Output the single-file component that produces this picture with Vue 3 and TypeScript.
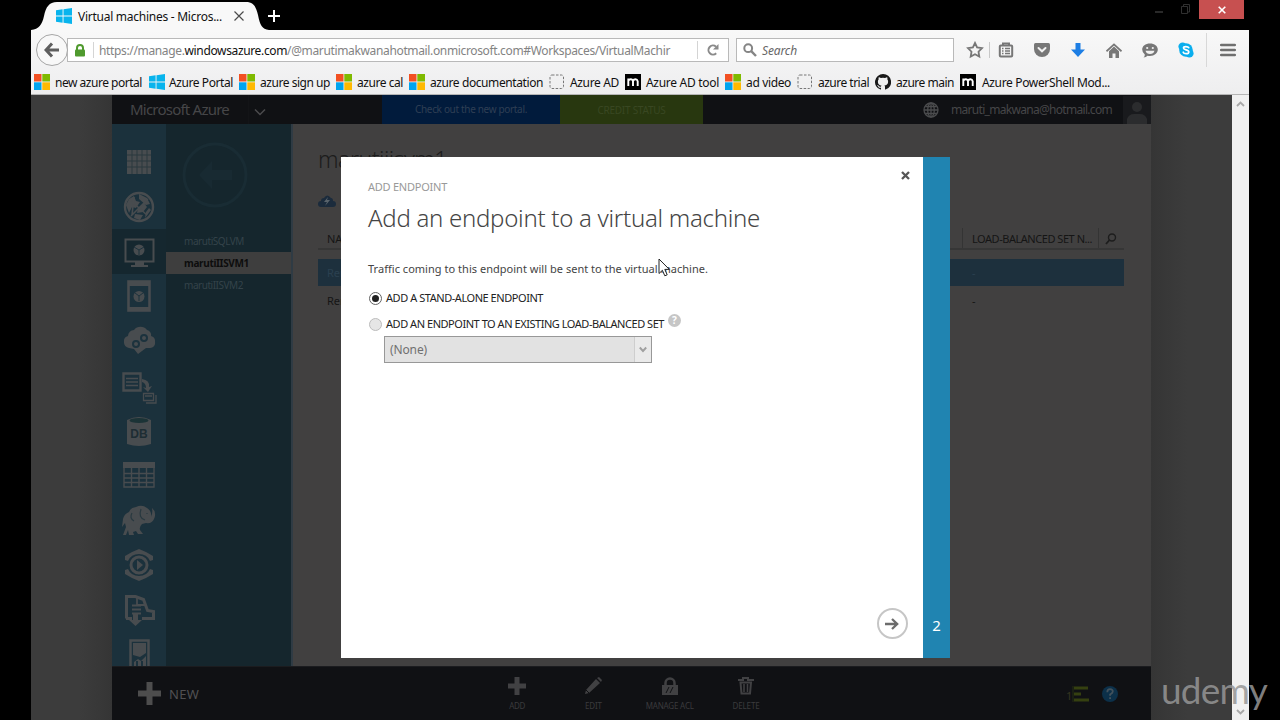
<script setup lang="ts">
import type { Directive } from 'vue'

const vFit: Directive<HTMLElement, number> = {
  mounted(el, binding) {
    const natural = el.getBoundingClientRect().width
    const count = (el.textContent || '').trim().length
    if (count > 0) el.style.letterSpacing = (binding.value - natural) / count + 'px'
  },
}

interface Bookmark {
  label: string
  icon: 'ms' | 'win' | 'blank' | 'm' | 'github'
  slot: number
  gap: number
  text: number
}

const bookmarks: Bookmark[] = [
  { label: 'new azure portal', icon: 'ms', slot: 115, gap: 5, text: 87 },
  { label: 'Azure Portal', icon: 'win', slot: 90, gap: 4, text: 64 },
  { label: 'azure sign up', icon: 'ms', slot: 97, gap: 5, text: 70 },
  { label: 'azure cal', icon: 'ms', slot: 73, gap: 5, text: 46 },
  { label: 'azure documentation', icon: 'ms', slot: 140, gap: 5, text: 113 },
  { label: 'Azure AD', icon: 'blank', slot: 76, gap: 5, text: 49 },
  { label: 'Azure AD tool', icon: 'm', slot: 100, gap: 5, text: 73 },
  { label: 'ad video', icon: 'ms', slot: 72, gap: 5, text: 45 },
  { label: 'azure trial', icon: 'blank', slot: 78, gap: 5, text: 51 },
  { label: 'azure main', icon: 'github', slot: 85, gap: 5, text: 58 },
  { label: 'Azure PowerShell Mod...', icon: 'm', slot: 170, gap: 6, text: 128 },
]

const services: { name: string; art: string }[] = [
  { name: 'all', art: '<rect x="6" y="6" width="24" height="24" fill="currentColor"/><path d="M6 11h24M6 17h24M6 23h24M11 6v24M16 6v24M21 6v24M26 6v24" stroke="#2b383e" stroke-width="1"/>' },
  { name: 'web', art: '<circle cx="18" cy="18" r="14" fill="none" stroke="currentColor" stroke-width="2.4"/><path d="M8 10l5-3 2 5 4 1-4 6-4-1-3 6-3-8zM18 5l8 4 3 6-4 1-7-6zM17 19l6-5 3 4-4 5-6 1zM25 23l3-4 2 2-6 8zM14 25l8 1-3 5-6-2z" fill="currentColor"/><path d="M9 11l17 15M10 27L27 10M13 8l-2 18" fill="none" stroke="currentColor" stroke-width="1.6"/>' },
  { name: 'vm', art: '<path d="M4.500 6.500h28v22h-28z" fill="none" stroke="currentColor" stroke-width="2"/><path d="M14 29h9v3h4v2H10v-2h4z" fill="currentColor"/><circle cx="18" cy="17" r="5.500" fill="currentColor"/><path d="M13 14l5 3 5-3M18 17v5" fill="none" stroke="#1c323d"/>' },
  { name: 'mobile', art: '<rect x="7.500" y="3.500" width="21" height="29" fill="none" stroke="currentColor" stroke-width="2.600"/><path d="M7 4h22v4H7zM7 29h22v4H7z" fill="currentColor"/><circle cx="18" cy="18.500" r="5.500" fill="currentColor"/><path d="M14 15l4 3 4-3M18 18v5" fill="none" stroke="#1c323d"/>' },
  { name: 'cloud', art: '<path d="M8 25a5.500 5.500 0 0 1-5-6 5.500 5.500 0 0 1 4-6 6 6 0 0 1 6-6 8 8 0 0 1 13 0 5 5 0 0 1 4 6 5.500 5.500 0 0 1 4 6 5 5 0 0 1-5 6h-4l-8 6-4-5z" fill="currentColor"/><g fill="none" stroke="#1c323d" stroke-width="2"><circle cx="15" cy="21" r="3"/><circle cx="23" cy="15" r="3"/></g>' },
  { name: 'sql-migrate', art: '<path d="M2.500 5.500h17v17h-17z" fill="none" stroke="currentColor" stroke-width="2.400"/><path d="M5 10.500h12M5 14h12M5 17.500h12" stroke="currentColor" stroke-width="1.600"/><path d="M21 11q8 1 7 8l3-1-4 6-5-5 3 1q0-5-4-6z" fill="currentColor"/><path d="M22.500 25.500h10v7h-10zM25 35h10v-8M24 28h7" fill="none" stroke="currentColor" stroke-width="1.300"/>' },
  { name: 'sql', art: '<path d="M6 7q12-6 24 0v24q-12 4-24 0z" fill="currentColor"/><ellipse cx="18" cy="7.500" rx="9.500" ry="2.500" fill="#1b3336"/><text x="18" y="25" text-anchor="middle" font-family="Liberation Sans, sans-serif" font-size="12" font-weight="700" fill="#1d2d33">DB</text>' },
  { name: 'storage', art: '<path d="M2 5h32v6H2z" fill="currentColor"/><path d="M3 11v19h30V11M3 16.500h30M3 21h30M3 25.500h30M10.500 11v19M18 11v19M25.500 11v19" fill="none" stroke="currentColor" stroke-width="1.400"/>' },
  { name: 'hdinsight', art: '<path d="M2 17q1-5 6-7 1-4 7-5 6-3 11 1 5 3 4 9 2-4 1-9 5 4 2 11-2 5-8 4l-4 1q-3 3-2 6l3 4h-5l-2-3-3 1 1 3h-5l-1-5-2 5H2l3-8-1-4-3 4z" fill="currentColor"/><path d="M20 7q-3 9 4 11M11 11q-3 5 2 8M26 11v1" fill="none" stroke="#293940" stroke-width="1.200"/>' },
  { name: 'media', art: '<path d="M18 2l7 3 7 4v4l-3 1q-3-7-11-7T7 14l-3-1V9l7-4zM18 34l7-3 7-4v-4l-3-1q-3 7-11 7T7 22l-3 1v4l7 4z" fill="currentColor"/><circle cx="18" cy="18" r="8" fill="none" stroke="currentColor" stroke-width="3"/><path d="M16 13l6 5-6 5z" fill="currentColor"/>' },
  { name: 'service-bus', art: '<path d="M5.500 26.500v-22h9l8 3 4 11 6 1v7H21M5 26.500h6" fill="none" stroke="currentColor" stroke-width="3"/><path d="M16 4v9h8M11 13.500h9M11 17.500h9M11 21.500h9" fill="none" stroke="currentColor" stroke-width="1.800"/><path d="M12 22h5v6h4l-6.500 6L8 28h4z" fill="currentColor"/>' },
  { name: 'studio', art: '<path d="M9.500 3.500h18v33h-18z" fill="none" stroke="currentColor" stroke-width="2.500"/><path d="M12 6h13v10l-6 4-7-2zM13 25l4-3 3 2 5-5v11h-3v-6h-2v6h-3v-6h-2v6h-2z" fill="currentColor"/>' },
]

const machines = [
  { name: 'marutiSQLVM', width: 60, active: false },
  { name: 'marutiIISVM1', width: 65, active: true },
  { name: 'marutiIISVM2', width: 59, active: false },
]
</script>

<template>
  <div class="screen">
    <div class="browser">
      <div class="tabstrip">
        <div class="tab">
          <svg class="tabshape" width="238" height="30" viewBox="0 0 238 30"><path d="M0 30C8 29 11 25 13 16 15 7 18 2 26 2H215C223 2 225 7 227 15 229 25 231 29 238 30Z" fill="#f8f8f8" /></svg>
          <svg class="winlogo" width="16" height="16" viewBox="0 0 16 16"><path d="M0 2.300 6.600 1.300V7.500H0zM7.500 1.200 16 0V7.500H7.500zM0 8.500h6.600v6.200L0 13.700zM7.500 8.500H16V16l-8.500-1.200z" fill="#08b4ed" /></svg>
          <span class="tabtitle"><span v-fit="144" class="fit">Virtual machines - Micros...</span></span>
          <svg class="tabclose" width="10" height="10" viewBox="0 0 10 10"><path d="M.5.500l9 9m0-9l-9 9" stroke="#4b4b4b" stroke-width="1.200" /></svg>
        </div>
        <svg class="newtab" width="12" height="12" viewBox="0 0 12 12"><path d="M6 0v12M0 6h12" stroke="#fff" stroke-width="2" /></svg>
        <div class="winbuttons">
          <svg width="40" height="18" viewBox="0 0 40 18"><path d="M1 12h8" stroke="#292929" stroke-width="2" /><path d="M27.500 6.500h6v7h-6zM29.500 6V4.500h6V12H34" fill="none" stroke="#303030" /></svg>
          <span class="winclose"><svg width="8" height="8" viewBox="0 0 8 8"><path d="M.7.700l6.600 6.600m0-6.600L.7 7.300" stroke="#fff" stroke-width="1.600" /></svg></span>
        </div>
      </div>

      <div class="toolbar">
        <div class="navrow">
          <div class="backbtn"><svg width="16" height="16" viewBox="0 0 16 16"><path d="M8 1.500 2 8l6 6.500M2.500 8H15" fill="none" stroke="#5e5e5e" stroke-width="3" /></svg></div>
          <div class="urlbar">
            <svg class="lock" width="12" height="13" viewBox="0 0 12 13"><path d="M3 6V4a3 3 0 0 1 6 0v2" fill="none" stroke="#4f9a2e" stroke-width="2" /><rect x="1" y="5.500" width="10" height="7" rx="1" fill="#4f9a2e" /></svg>
            <span class="urltext"><span v-fit="571" class="fit">https://manage.<b>windowsazure.com</b>/@marutimakwanahotmail.onmicrosoft.com#Workspaces/VirtualMachir</span></span>
            <span class="reload"><svg width="12" height="12" viewBox="0 0 12 12"><path d="M9.200 9.200A4.500 4.500 0 1 1 9 2.700" fill="none" stroke="#8a8a8a" stroke-width="2" /><path d="M11.500 0v5.500H6z" fill="#8a8a8a" /></svg></span>
          </div>
          <div class="searchbox">
            <svg width="14" height="14" viewBox="0 0 14 14"><circle cx="5.200" cy="5.200" r="3.900" fill="none" stroke="#858585" stroke-width="2" /><path d="M8.200 8.200l4.800 4.800" stroke="#858585" stroke-width="2.400" /></svg>
            <span v-fit="35" class="fit">Search</span>
          </div>
          <div class="tools">
            <svg class="t-star" width="18" height="18" viewBox="0 0 18 18"><path d="M9 2l2.100 4.500 4.900.7-3.500 3.500.8 4.900L9 13.300l-4.300 2.300.8-4.900L2 7.200l4.900-.7z" fill="none" stroke="#777" stroke-width="1.800" /></svg>
            <i class="sep"></i>
            <svg class="t-list" width="16" height="16" viewBox="0 0 16 16"><path d="M5 3V1.500h6V3" fill="none" stroke="#777" stroke-width="2" /><rect x="1.800" y="3.500" width="12.400" height="11" rx="1" fill="none" stroke="#777" stroke-width="2" /><path d="M4 6.500h1.500M4 9h1.500M4 11.500h1.500M7 6.500h5M7 9h5M7 11.500h5" stroke="#777" stroke-width="1.400" /></svg>
            <svg class="t-pocket" width="16" height="14" viewBox="0 0 16 14"><path d="M1.500 0h13Q16 0 16 1.500V6a8 8 0 0 1-16 0V1.500Q0 0 1.500 0z" fill="#777" /><path d="M4.500 5 8 8.300 11.500 5" fill="none" stroke="#f1f1f1" stroke-width="2" stroke-linecap="round" /></svg>
            <svg class="t-down" width="14" height="14" viewBox="0 0 14 14"><path d="M4.500 0h5v6.500H14L7 14 0 6.500h4.500z" fill="#1d7ee4" /></svg>
            <svg class="t-home" width="16" height="15" viewBox="0 0 16 15"><path d="M.5 8.300 8 1.300l7.500 7" fill="none" stroke="#777" stroke-width="1.700" /><path d="M3 8.200 8 3.600l5 4.600V15H9.500v-4.500h-3V15H3z" fill="#777" /></svg>
            <svg class="t-chat" width="16" height="15" viewBox="0 0 16 15"><path d="M8 .5c4.500 0 7.800 2.600 7.800 6S12.500 13 8 13q-1.300 0-2.400-.3Q4 14.500 1.500 14.500 3 13.300 2.800 11.500.2 9.500.2 6.500c0-3.400 3.300-6 7.800-6z" fill="#777" /><circle cx="5.200" cy="5" r="1.100" fill="#f1f1f1" /><circle cx="10.800" cy="5" r="1.100" fill="#f1f1f1" /><path d="M3.500 7.700h9q-1 3.300-4.500 3.300T3.500 7.700z" fill="#f1f1f1" /></svg>
            <svg class="t-skype" width="16" height="16" viewBox="0 0 16 16"><circle cx="8" cy="8" r="6.800" fill="#0aaeee" /><circle cx="4.600" cy="4.600" r="4.200" fill="#0aaeee" /><circle cx="11.400" cy="11.400" r="4.200" fill="#0aaeee" /><path d="M10.700 5.700C10 4.300 5.500 4 5.500 6.100c0 2.200 5.300 1.300 5.300 3.800 0 2.300-4.900 2.200-5.600.3" fill="none" stroke="#fff" stroke-width="1.700" stroke-linecap="round" /></svg>
            <i class="sep tall"></i>
            <svg class="t-menu" width="16" height="14" viewBox="0 0 16 14"><path d="M1.200 2h13.600M1.200 7h13.600M1.200 12h13.600" stroke="#6f6f6f" stroke-width="2.600" stroke-linecap="round" /></svg>
          </div>
        </div>

        <div class="bookmarks">
          <div v-for="b in bookmarks" :key="b.label" class="bookmark" :style="{ width: b.slot + 'px', gap: b.gap + 'px' }">
            <svg width="16" height="16" viewBox="0 0 16 16">
              <g v-if="b.icon === 'ms'"><path d="M0 0h7.500v7.500H0z" fill="#f25022" /><path d="M8.300 0H16v7.500H8.300z" fill="#7fba00" /><path d="M0 8.300h7.500V16H0z" fill="#00a4ef" /><path d="M8.300 8.300H16V16H8.300z" fill="#ffb900" /></g>
              <path v-else-if="b.icon === 'win'" d="M0 2.300 6.600 1.300V7.500H0zM7.500 1.200 16 0V7.500H7.500zM0 8.500h6.600v6.200L0 13.700zM7.500 8.500H16V16l-8.500-1.200z" fill="#08b4ed" />
              <rect v-else-if="b.icon === 'blank'" x="1" y="1" width="13.500" height="13.500" rx="2" fill="none" stroke="#777" stroke-dasharray="2.500 1.500" />
              <g v-else-if="b.icon === 'm'"><path d="M0 0h16v16H0z" fill="#000" /><path d="M3.300 12V4.500M3.300 7Q4 5.200 5.800 5.200T8 7.200V12M8 7Q8.800 5.200 10.500 5.200t2.200 2V12" fill="none" stroke="#fff" stroke-width="1.900" /></g>
              <path v-else d="M8 0a8 8 0 0 0-2.500 15.600c.4.100.5-.2.500-.4v-1.500c-2.200.5-2.700-1-2.700-1-.4-.9-.9-1.200-.9-1.200-.7-.5.100-.5.100-.5.800.1 1.200.8 1.200.8.700 1.300 1.900.9 2.300.7.100-.5.300-.9.500-1.100-1.800-.2-3.600-.9-3.600-4 0-.9.300-1.600.8-2.100-.1-.2-.4-1 .1-2.100 0 0 .7-.2 2.200.8a7.500 7.500 0 0 1 4 0c1.500-1 2.200-.8 2.200-.8.400 1.100.2 1.900.1 2.100.5.600.8 1.300.8 2.100 0 3.100-1.900 3.700-3.700 3.900.3.300.6.800.6 1.500v2.400c0 .2.100.5.600.4A8 8 0 0 0 8 0z" fill="#191919" />
            </svg>
            <span v-fit="b.text" class="fit">{{ b.label }}</span>
          </div>
        </div>
      </div>

      <div class="viewport">
        <div class="gutter left"></div>
        <main class="portal">
          <header class="topbar">
            <div class="brand"><span v-fit="99" class="fit">Microsoft Azure</span></div>
            <div class="brandmenu"><svg width="12" height="8" viewBox="0 0 12 8"><path d="M1 1.500l5 5 5-5" fill="none" stroke="#4b4b4d" stroke-width="1.500" /></svg></div>
            <div class="newportal"><span v-fit="112" class="fit">Check out the new portal.</span></div>
            <div class="credit"><span v-fit="68" class="fit">CREDIT STATUS</span></div>
            <div class="account">
              <svg width="16" height="16" viewBox="0 0 16 16"><g fill="none" stroke="#4b4c4e" stroke-width="1.300"><circle cx="8" cy="8" r="7" /><ellipse cx="8" cy="8" rx="3.300" ry="7" /><path d="M8 1v14M1 8h14M2.300 4.500h11.400M2.300 11.500h11.400" /></g></svg>
              <span v-fit="161" class="fit">maruti_makwana@hotmail.com</span>
              <div class="avatar"><svg width="28" height="28" viewBox="0 0 28 28"><circle cx="14" cy="11" r="5" fill="#2b2c2e" /><path d="M4 28v-5q2-5 7-5h6q5 0 7 5v5z" fill="#2b2c2e" /></svg></div>
            </div>
          </header>

          <div class="body">
            <nav class="services">
              <div v-for="s in services" :key="s.name" class="service" :class="{ current: s.name === 'vm' }">
                <svg width="36" height="36" viewBox="0 0 36 36" v-html="s.art"></svg>
              </div>
            </nav>
            <aside class="machines">
              <div class="backring"><svg width="68" height="68" viewBox="0 0 68 68"><circle cx="34" cy="34" r="31" fill="none" stroke="#192c34" stroke-width="3" /><path d="M31 20 18 34l13 14v-9h20V29H31z" fill="#182a32" /></svg></div>
              <div v-for="m in machines" :key="m.name" class="machine" :class="{ chosen: m.active }"><span v-fit="m.width" class="fit">{{ m.name }}</span></div>
            </aside>
            <section class="content">
              <h1><span v-fit="129" class="fit">marutiiisvm1</span></h1>
              <div class="command"><svg width="18" height="12" viewBox="0 0 18 12"><path d="M3 12a3 3 0 0 1 0-6q0-3 3-3 3-5 7 0 2 0 2 3a3 3 0 0 1 0 6z" fill="#1b2b3c" /><path d="M10 2 6 7h3l-2 4 5-6H9z" fill="#59636b" /></svg></div>
              <div class="thead">
                <span class="name">NAME</span>
                <span class="lb"><span v-fit="120" class="fit">LOAD-BALANCED SET N...</span></span>
                <span class="find"><svg width="12" height="12" viewBox="0 0 12 12"><circle cx="7" cy="4.500" r="3.500" fill="none" stroke="#1d1d1d" stroke-width="1.400" /><path d="M4.500 7 1 11" stroke="#1d1d1d" stroke-width="1.800" /></svg></span>
              </div>
              <div class="trow picked"><span class="name">Remote</span><span class="lb">-</span></div>
              <div class="trow"><span class="name">Remote</span><span class="lb">-</span></div>
            </section>
          </div>

          <footer class="drawer">
            <div class="new"><svg width="23" height="23" viewBox="0 0 23 23"><path d="M8.500 0h6v8.500H23v6h-8.500V23h-6v-8.500H0v-6h8.500z" fill="#4d4d4d" /></svg><span v-fit="30" class="fit">NEW</span></div>
            <div class="actions">
              <div class="action"><svg width="18" height="18" viewBox="0 0 18 18"><path d="M6.500 0h5v6.500H18v5h-6.500V18h-5v-6.500H0v-5h6.500z" fill="#414143" /></svg><span v-fit="16" class="fit">ADD</span></div>
              <div class="action"><svg width="18" height="18" viewBox="0 0 18 18"><path d="M12 2l4 4L5 16l-4 1 1-4zM13 1l2-1 3 3-1 2z" fill="#414143" /><path d="M2 13l3 3" stroke="#0f1013" /></svg><span v-fit="17" class="fit">EDIT</span></div>
              <div class="action"><svg width="18" height="18" viewBox="0 0 18 18"><path d="M4.500 9V6a4.500 4.500 0 0 1 9 0v3" fill="none" stroke="#414143" stroke-width="2.500" /><path d="M1 8h16v10H1z" fill="#414143" /><path d="M8 10l-3 6M12 10l-3 6" stroke="#101114" /></svg><span v-fit="48" class="fit">MANAGE ACL</span></div>
              <div class="action"><svg width="18" height="18" viewBox="0 0 18 18"><path d="M1 3h5V1h5v2h6M3.500 5.500h10.500l-1 11H4.500z" fill="none" stroke="#414143" stroke-width="2" /><path d="M7 7v8M10.500 7v8" stroke="#414143" stroke-width="1.500" /></svg><span v-fit="27" class="fit">DELETE</span></div>
            </div>
            <div class="status">
              <span class="count">1</span>
              <svg class="jobs" width="18" height="16" viewBox="0 0 18 16"><path d="M2 2h14M2 8h7M2 14h15" stroke="#354010" stroke-width="3" /><path d="M1 0v16" stroke="#252e10" /></svg>
              <svg width="16" height="16" viewBox="0 0 16 16"><circle cx="8" cy="8" r="8" fill="#0c3049" /><path d="M5.300 6.200q0-3 2.800-3t2.700 2.400q0 1.400-2.700 3v1.200M8.100 11.300v1.800" fill="none" stroke="#43525c" stroke-width="1.800" /></svg>
            </div>
          </footer>
        </main>
        <div class="gutter right"></div>
        <div class="scrollbar">
          <svg width="9" height="6" viewBox="0 0 9 6"><path d="M1 5l3.500-3.500L8 5" fill="none" stroke="#a8a8a8" stroke-width="1.800" /></svg>
          <svg width="9" height="6" viewBox="0 0 9 6"><path d="M1 1l3.500 3.500L8 1" fill="none" stroke="#a8a8a8" stroke-width="1.800" /></svg>
        </div>
      </div>
    </div>

    <div class="dialog">
      <div class="pane">
        <svg class="x" width="9" height="9" viewBox="0 0 9 9"><path d="M1 1l7 7m0-7L1 8" stroke="#555" stroke-width="2.300" /></svg>
        <div class="crumb"><span v-fit="79" class="fit">ADD ENDPOINT</span></div>
        <h2><span v-fit="392" class="fit">Add an endpoint to a virtual machine</span></h2>
        <p><span v-fit="340" class="fit">Traffic coming to this endpoint will be sent to the virtual machine.</span></p>
        <div class="option"><i class="radio on"></i><span v-fit="157" class="fit">ADD A STAND-ALONE ENDPOINT</span></div>
        <div class="option second"><i class="radio"></i><span v-fit="278" class="fit">ADD AN ENDPOINT TO AN EXISTING LOAD-BALANCED SET</span><span class="help">?</span></div>
        <div class="select"><span v-fit="37" class="fit">(None)</span><span class="arrow"><svg width="8" height="7" viewBox="0 0 8 7"><path d="M.8 1.500 4 5l3.200-3.500" fill="none" stroke="#a0a0a0" stroke-width="1.900" /></svg></span></div>
        <div class="next"><svg width="14" height="12" viewBox="0 0 14 12"><path d="M0 6h12M7 1l5.200 5L7 11" fill="none" stroke="#6c6c6c" stroke-width="2.300" /></svg></div>
      </div>
      <div class="step">2</div>
    </div>

    <svg class="cursor" width="14" height="21" viewBox="0 0 14 21"><path d="M1 1v14.500l3.400-3.200 2.400 5.500 2.400-1-2.400-5.400h4.500z" fill="#fff" stroke="#222" /></svg>
    <div class="watermark"><span v-fit="106" class="fit">udemy</span></div>
  </div>
</template>

<style>
body { background: #000; overflow: hidden; }
</style>

<style scoped>
* { box-sizing: border-box; }
svg { display: block; flex: none; }
.screen { position: relative; width: 1280px; height: 720px; overflow: hidden; background: #000; font-family: "Noto Sans", "Open Sans", sans-serif; font-size: 12px; color: #111; }
.fit { display: inline-block; white-space: nowrap; }
.browser { width: 1218px; height: 720px; margin-left: 31px; display: flex; flex-direction: column; }
.tabstrip { height: 30px; display: flex; align-items: flex-start; flex: none; }
.tab { position: relative; width: 236px; height: 30px; padding: 2px 0 0 24px; display: flex; align-items: center; flex: none; }
.tabshape { position: absolute; left: 0; top: 0; }
.winlogo, .tabtitle, .tabclose { position: relative; }
.winlogo { margin-left: 1px; }
.tabtitle { width: 156px; margin-left: 6px; color: #111; }
.newtab { margin: 10px 0 0 1px; }
.winbuttons { margin-left: auto; display: flex; width: 92px; height: 19px; margin-right: 1px; }
.winbuttons { margin-right: 3px; }
.winclose { width: 45px; height: 19px; margin-left: 5px; background: #c75050; display: flex; align-items: center; justify-content: center; }
.toolbar { height: 65px; flex: none; background: linear-gradient(#f8f8f8, #eeeeef); border-bottom: 1px solid #b5b5b5; }
.navrow { display: flex; height: 40px; align-items: center; padding-left: 5px; }
.backbtn { position: relative; z-index: 1; width: 32px; height: 32px; border: 1px solid #a6a6a6; border-radius: 50%; background: #f8f8f8; display: flex; align-items: center; justify-content: center; }
.urlbar { width: 662px; height: 24px; margin-left: -1px; border: 1px solid #b9b9b9; background: #fff; display: flex; align-items: center; }
.lock { margin-left: 6px; }
.urltext { margin-left: 7px; border-left: 1px solid #d5d5d5; padding-left: 5px; width: 604px; height: 16px; line-height: 17px; color: #838383; }
.urltext b { font-weight: 400; color: #111; }
.reload { height: 18px; border-left: 1px solid #d4d4d4; display: flex; align-items: center; padding-left: 9px; }
.searchbox { width: 218px; height: 24px; margin-left: 7px; border: 1px solid #b9b9b9; background: #fff; display: flex; align-items: center; gap: 5px; padding-left: 6px; font-style: italic; color: #676767; }
.tools { display: flex; align-items: center; margin-left: 12px; }
.sep { width: 1px; height: 16px; background: #c8c8c8; margin: 0 8px 0 5px; }
.sep.tall { height: 34px; margin: 0 13px 0 12px; background: #d8d8d8; }
.t-pocket { margin-left: 20px; }
.t-down { margin-left: 21px; }
.t-home { margin-left: 21px; }
.t-chat { margin-left: 20px; }
.t-skype { margin-left: 20px; }
.bookmarks { display: flex; padding-left: 3px; height: 24px; align-items: center; color: #111; }
.bookmark { display: flex; align-items: center; flex: none; }
.bookmark .fit { padding-top: 1px; }

.viewport { flex: 1; display: flex; min-height: 0; }
.gutter.left { width: 81px; background: linear-gradient(90deg, #3c3c3c 60%, #353535); }
.gutter.right { width: 81px; background: linear-gradient(90deg, #353535, #3c3c3c 45%); }
.scrollbar { width: 17px; background: #f0f0f0; display: flex; flex-direction: column; justify-content: space-between; align-items: center; padding: 6px 0 5px; }
.portal { width: 1039px; display: flex; flex-direction: column; background: #414040; }
.topbar { height: 29px; background: #101114; display: flex; flex: none; color: #464648; }
.brand { width: 136px; padding: 3px 0 0 18px; font-size: 15px; line-height: 22px; }
.brandmenu { width: 134px; padding: 13px 0 0 5px; border-left: 1px solid #131417; }
.newportal { width: 178px; background: #011b3c; text-align: center; font-size: 10px; line-height: 29px; color: #2f3f54; }
.credit { width: 143px; background: #28370f; text-align: center; font-size: 10px; line-height: 30px; color: #394722; }
.account { flex: 1; display: flex; align-items: center; padding-left: 220px; font-size: 12px; }
.account .fit { margin-left: 12px; }
.avatar { width: 28px; height: 28px; margin-left: auto; background: #191a1d; }
.body { height: 542px; display: flex; flex: none; overflow: hidden; }
.services { width: 54px; padding-top: 15.500px; background: #1b313c; color: #484c4f; flex: none; }
.service { height: 44.800px; display: flex; align-items: center; justify-content: center; }
.service.current { background: #15272f; }
.machines { width: 125px; background: #15262d; flex: none; font-size: 10px; color: #34434a; }
.backring { height: 106px; padding: 17px 0 0 15px; }
.machine { height: 22px; line-height: 23px; padding-left: 18px; }
.machine.chosen { background: #3e3e3e; color: #0d0d0d; font-weight: 700; }
.content { flex: 1; border-left: 2px solid #2f3b44; padding: 20px 27px 0 25px; color: #151515; font-size: 11px; }
h1 { margin: 0; font-weight: 300; font-size: 23px; line-height: 30px; height: 48px; color: #1c1c1c; }
.command { height: 36px; padding-top: 3px; }
.thead { height: 22px; display: flex; align-items: center; border-bottom: 2px solid #363636; }
.name { flex: 1; padding-left: 9px; }
.lb { width: 136px; padding-left: 10px; }
.thead .lb, .thead .find { height: 20px; line-height: 22px; border-left: 1px solid #343434; }
.thead .lb { padding-left: 9px; }
.find { width: 26px; padding: 5px 0 0 6px; }
.trow { height: 28px; display: flex; align-items: center; padding-right: 26px; }
.trow.picked { margin-top: 9px; height: 27px; background: #1d303d; color: #2b4050; padding-right: 26px; }
.drawer { flex: 1; background: #101114; display: flex; border-top: 1px solid #1b1c1f; }
.new { width: 366px; padding: 15px 0 0 26px; display: flex; align-items: flex-start; gap: 8px; font-size: 13px; line-height: 24px; color: #505052; }
.actions { display: flex; width: 542px; padding-left: 1px; }
.action { width: 76.300px; display: flex; flex-direction: column; align-items: center; padding-top: 10px; font-size: 8px; line-height: 12px; color: #3b3b3d; gap: 5px; }
.status { display: flex; align-items: flex-start; padding-top: 19px; margin-left: 46px; color: #353520; }
.count { font-size: 11px; line-height: 20px; }
.jobs { margin-right: 12px; }

.dialog { position: absolute; left: 341px; top: 157px; width: 609px; height: 501px; display: flex; background: #fff; }
.pane { position: relative; flex: 1; padding: 21px 0 0 27px; color: #333; }
.x { position: absolute; right: 13px; top: 14px; }
.crumb { font-size: 11px; line-height: 18px; color: #999; }
h2 { margin: 5px 0 0; font-size: 24px; font-weight: 300; line-height: 34px; color: #454545; height: 59px; }
p { margin: 0; font-size: 11px; line-height: 18px; height: 28px; color: #444; }
.option { display: flex; align-items: center; height: 18px; font-size: 11px; color: #222; }
.option.second { margin-top: 8px; }
.radio { width: 13px; height: 13px; border: 1px solid #bcbcbc; border-radius: 50%; background: #e6e6e6; margin: 2px 4px 0 1px; display: flex; align-items: center; justify-content: center; }
.radio.on { background: #fff; border-color: #636363; }
.radio.on::after { content: ""; width: 7px; height: 7px; border-radius: 50%; background: #202020; }
.help { width: 13px; height: 13px; margin: -5px 0 0 4px; border-radius: 50%; background: #c6c6c6; color: #fff; font-size: 10px; font-weight: 700; line-height: 13px; text-align: center; }
.select { width: 268px; height: 27px; margin: 4px 0 0 16px; border: 1px solid #989898; background: #e2e2e2; display: flex; align-items: center; padding-left: 5px; color: #707070; }
.arrow { width: 17px; height: 25px; margin-left: auto; border-left: 1px solid #cecece; background: #eaeaea; display: flex; align-items: center; justify-content: center; }
.next { position: absolute; right: 15px; bottom: 19px; width: 31px; height: 31px; border: 2px solid #c6c6c6; border-radius: 50%; display: flex; align-items: center; justify-content: center; }
.next svg { margin-left: -2px; }
.step { width: 27px; background: #2084b1; color: #fff; text-align: center; font-size: 15px; padding-top: 458px; line-height: 20px; }
.cursor { position: absolute; left: 658px; top: 258px; }
.watermark { position: absolute; left: 1161px; top: 667px; font-family: Lato, sans-serif; font-size: 37px; line-height: 46px; color: rgba(150, 150, 150, .85); }
</style>
